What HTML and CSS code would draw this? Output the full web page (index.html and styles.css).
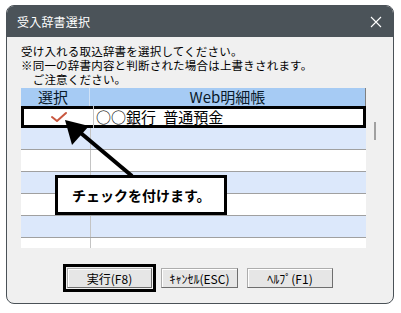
FILE: index.html
```html
<!DOCTYPE html>
<html lang="ja">
<head>
    <meta charset="UTF-8">
    <title>受入辞書選択</title>
    <link rel="stylesheet" href="styles.css">
</head>
<body>

    <div class="window">
        <div class="titlebar">
            <span class="title">受入辞書選択</span>
            <span class="close-btn">
                <svg width="12" height="12" viewBox="0 0 12 12">
                    <path d="M1 1 L11 11 M11 1 L1 11" stroke="#ffffff" stroke-width="1.1" fill="none"/>
                </svg>
            </span>
        </div>

        <div class="content">
            <div class="message">
                <p>受け入れる取込辞書を選択してください。</p>
                <p>※同一の辞書内容と判断された場合は上書きされます。</p>
                <p>　ご注意ください。</p>
            </div>

            <div class="list">
                <div class="grid">
                    <div class="row head">
                        <div class="cell col-check">選択</div>
                        <div class="cell col-name">Web明細帳</div>
                    </div>
                    <div class="rows">
                        <div class="row marked">
                            <div class="cell col-check">
                                <svg width="18" height="12" viewBox="0 0 18 12">
                                    <path d="M2 6 L7 10 L16 2" stroke="#c9573f" stroke-width="2" fill="none" stroke-linecap="round" stroke-linejoin="round"/>
                                </svg>
                            </div>
                            <div class="cell col-name name-text">○○銀行 普通預金</div>
                        </div>
                        <div class="row alt"><div class="cell col-check"></div><div class="cell col-name"></div></div>
                        <div class="row"><div class="cell col-check"></div><div class="cell col-name"></div></div>
                        <div class="row alt"><div class="cell col-check"></div><div class="cell col-name"></div></div>
                        <div class="row"><div class="cell col-check"></div><div class="cell col-name"></div></div>
                        <div class="row alt"><div class="cell col-check"></div><div class="cell col-name"></div></div>
                        <div class="row"><div class="cell col-check"></div><div class="cell col-name"></div></div>
                    </div>
                </div>
                <div class="scrollbar">
                    <div class="thumb"></div>
                </div>
            </div>

            <div class="buttons">
                <button class="btn btn-run">実行(F8)</button>
                <button class="btn btn-cancel">ｷｬﾝｾﾙ(ESC)</button>
                <button class="btn btn-help">ﾍﾙﾌﾟ(F1)</button>
            </div>
        </div>

        <!-- annotation drawn over the dialog -->
        <svg class="arrow" width="388" height="299" viewBox="0 0 388 299">
            <line x1="70" y1="124" x2="126" y2="171" stroke="#000" stroke-width="4"/>
            <polygon points="59,115 83,121 66,140" fill="#000"/>
        </svg>
        <div class="callout">チェックを付けます。</div>
    </div>

</body>
</html>
```

FILE: styles.css
```css
body {
    margin: 0;
    padding: 0;
    background-color: #ffffff;
    font-family: "Noto Sans CJK JP", "Noto Sans", sans-serif;
}
p {
    margin: 0;
}
.window {
    position: relative;
    margin: 5px 0 0 6px;
    width: 386px;
    height: 297px;
    border: 1px solid #4a5157;
    border-radius: 8px;
    background-color: #f0f0f0;
    overflow: hidden;
    display: flex;
    flex-direction: column;
}
.titlebar {
    height: 31px;
    background-color: #4b5359;
    color: #ffffff;
    display: flex;
    align-items: center;
    justify-content: space-between;
    padding: 0 10px 0 10px;
}
.title {
    font-size: 12px;
    letter-spacing: 0.2px;
}
.close-btn {
    display: flex;
    margin-right: 1px;
}
.content {
    padding: 7px 0 0 14px;
    display: flex;
    flex-direction: column;
}
.message {
    font-size: 11.5px;
    line-height: 14px;
    letter-spacing: 0.2px;
    color: #000;
    height: 44px;
}
.list {
    display: flex;
    height: 160px;
}
.grid {
    width: 345px;
}
.rows {
    height: 142px;
    overflow: hidden;
}
.row {
    display: flex;
    height: 22px;
    box-sizing: border-box;
    border-bottom: 1px solid #a0a0a0;
    background-color: #ffffff;
}
.row.alt {
    background-color: #dce8fb;
}
.row.head {
    height: 18px;
    background-color: #a6cbf4;
    border-bottom: none;
    border-right: 1px solid #808080;
}
.row.marked {
    box-shadow: inset 0 0 0 3px #000;
    border-bottom: none;
}
.cell {
    display: flex;
    align-items: center;
}
.col-check {
    width: 69px;
    justify-content: center;
    border-right: 1px solid #c4c4c4;
}
.col-name {
    flex: 1;
}
.head .cell {
    font-size: 15px;
    color: #0a1a2a;
    justify-content: center;
    line-height: 18px;
}
.head .col-check {
    border-right: 1px solid #d0e2f7;
    padding-right: 4px;
    box-sizing: border-box;
}
.marked .col-check {
    padding-left: 3px;
}
.name-text {
    font-size: 15px;
    line-height: 22px;
    padding-left: 2px;
    word-spacing: 4px;
    color: #000;
}
.scrollbar {
    width: 17px;
}
.thumb {
    width: 2px;
    height: 18px;
    margin: 34px 0 0 8px;
    background-color: #a0a0a0;
}
.buttons {
    display: flex;
    justify-content: center;
    gap: 9px;
    margin-top: 20px;
    margin-left: -14px;
}
.btn {
    height: 20px;
    padding: 0;
    font-family: "Noto Sans CJK JP", sans-serif;
    font-size: 12px;
    color: #000;
    background-color: #e6e6e6;
    border: 1px solid #adadad;
    border-right-color: #6e6e6e;
    border-bottom-color: #6e6e6e;
    box-shadow: inset 1px 1px 0 #ffffff;
}
.btn-run {
    width: 85px;
    outline: 3px solid #000;
    outline-offset: 1px;
}
.btn-cancel {
    width: 77px;
}
.btn-help {
    width: 86px;
}
.arrow {
    position: absolute;
    left: -1px;
    top: -1px;
}
.callout {
    position: absolute;
    left: 48px;
    top: 169px;
    width: 152px;
    height: 34px;
    border: 3px solid #000;
    background-color: #ffffff;
    font-size: 14px;
    font-weight: bold;
    display: flex;
    align-items: center;
    padding-left: 14px;
}
```
